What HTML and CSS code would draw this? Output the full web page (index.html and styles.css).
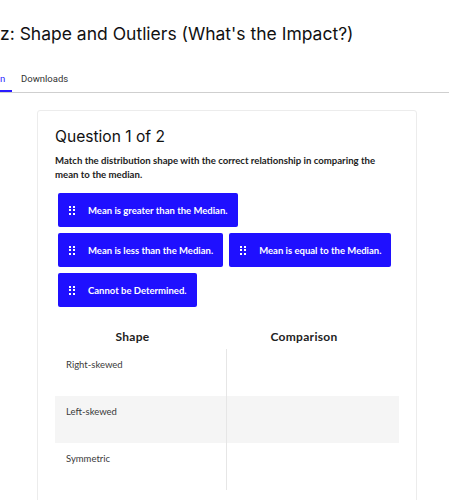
FILE: index.html
```html
<!DOCTYPE html>
<html>
<head>
<meta charset="utf-8">
<link rel="stylesheet" href="styles.css">
</head>
<body>
<div class="page">
  <h1 class="title">z: Shape and Outliers (What's the Impact?)</h1>
  <div class="tabs">
    <div class="tab active">n</div>
    <div class="tab">Downloads</div>
  </div>
  <div class="card">
    <h2 class="qtitle">Question 1 of 2</h2>
    <p class="prompt">Match the distribution shape with the correct relationship in comparing the mean to the median.</p>
    <div class="options">
      <div class="optrow">
        <div class="opt"><span class="grip"><i></i><i></i><i></i><i></i><i></i><i></i></span>Mean is greater than the Median.</div>
      </div>
      <div class="optrow">
        <div class="opt"><span class="grip"><i></i><i></i><i></i><i></i><i></i><i></i></span>Mean is less than the Median.</div>
        <div class="opt"><span class="grip"><i></i><i></i><i></i><i></i><i></i><i></i></span>Mean is equal to the Median.</div>
      </div>
      <div class="optrow">
        <div class="opt"><span class="grip"><i></i><i></i><i></i><i></i><i></i><i></i></span>Cannot be Determined.</div>
      </div>
    </div>
    <div class="match">
      <div class="heads">
        <div class="head">Shape</div>
        <div class="head">Comparison</div>
      </div>
      <div class="rows">
        <div class="row"><div class="cell">Right-skewed</div><div class="cell drop"></div></div>
        <div class="row alt"><div class="cell">Left-skewed</div><div class="cell drop"></div></div>
        <div class="row"><div class="cell">Symmetric</div><div class="cell drop"></div></div>
      </div>
    </div>
  </div>
</div>
</body>
</html>
```
FILE: styles.css
```css
html, body {
  margin: 0;
  padding: 0;
  background: #fff;
}
.page {
  width: 449px;
  height: 500px;
  overflow: hidden;
  font-family: Lato, "Noto Sans", sans-serif;
  color: #222;
}
.title {
  margin: 0;
  padding: 23px 0 0 0;
  font-family: Inter, "Liberation Sans", sans-serif;
  font-weight: 400;
  font-size: 17.5px;
  line-height: 22px;
  color: #111;
  white-space: nowrap;
}
.tabs {
  display: flex;
  margin-top: 25px;
  border-bottom: 1px solid #cfcfcf;
  height: 22px;
}
.tab {
  font-family: Roboto, "Liberation Sans", sans-serif;
  font-size: 9.5px;
  line-height: 12px;
  color: #333;
  padding: 3px 0 0 0;
  margin-right: 12px;
}
.tab.active {
  width: 12px;
  box-sizing: border-box;
  border-bottom: 2px solid #2a1cff;
  height: 22px;
  margin-right: 9px;
  color: #2a1cff;
}
.card {
  margin: 17px 0 0 37px;
  width: 380px;
  height: 420px;
  box-sizing: border-box;
  border: 1px solid #ececec;
  border-radius: 3px;
  padding: 0 17px;
}
.qtitle {
  margin: 16px 0 0 0;
  font-family: Inter, "Liberation Sans", sans-serif;
  font-weight: 400;
  font-size: 15.6px;
  line-height: 20px;
  color: #111;
}
.prompt {
  margin: 7px 0 0 0;
  font-size: 9.6px;
  line-height: 13.5px;
  font-weight: 700;
  color: #222;
}
.options {
  display: flex;
  flex-direction: column;
  gap: 6px;
  margin: 12px 0 0 3px;
}
.optrow {
  display: flex;
  gap: 6px;
}
.opt {
  display: flex;
  align-items: center;
  height: 34px;
  box-sizing: border-box;
  padding: 0 10px 0 11px;
  background: #1f10ff;
  border-radius: 2px;
  color: #fff;
  font-size: 9.5px;
  font-weight: 700;
  white-space: nowrap;
}
.grip {
  display: grid;
  grid-template-columns: 2px 2px;
  grid-template-rows: 2px 2px 2px;
  column-gap: 1.5px;
  row-gap: 1.5px;
  margin-right: 13.5px;
}
.grip i {
  display: block;
  width: 2px;
  height: 2px;
  background: #fff;
}
.match {
  margin-top: 22px;
}
.heads {
  display: grid;
  grid-template-columns: 171px 172px;
  margin-left: -8px;
}
.head {
  text-align: center;
  font-size: 12px;
  font-weight: 700;
  line-height: 16px;
  color: #222;
  letter-spacing: 0.3px;
}
.rows {
  margin-top: 4px;
}
.row {
  display: grid;
  grid-template-columns: 171px 172px;
  height: 47px;
}
.row.alt {
  background: #f5f5f5;
}
.cell {
  padding: 9px 0 0 11px;
  font-size: 9.5px;
  line-height: 14px;
  color: #3a3a3a;
}
.cell.drop {
  border-left: 1px solid #e6e6e6;
  padding: 0;
}
```
